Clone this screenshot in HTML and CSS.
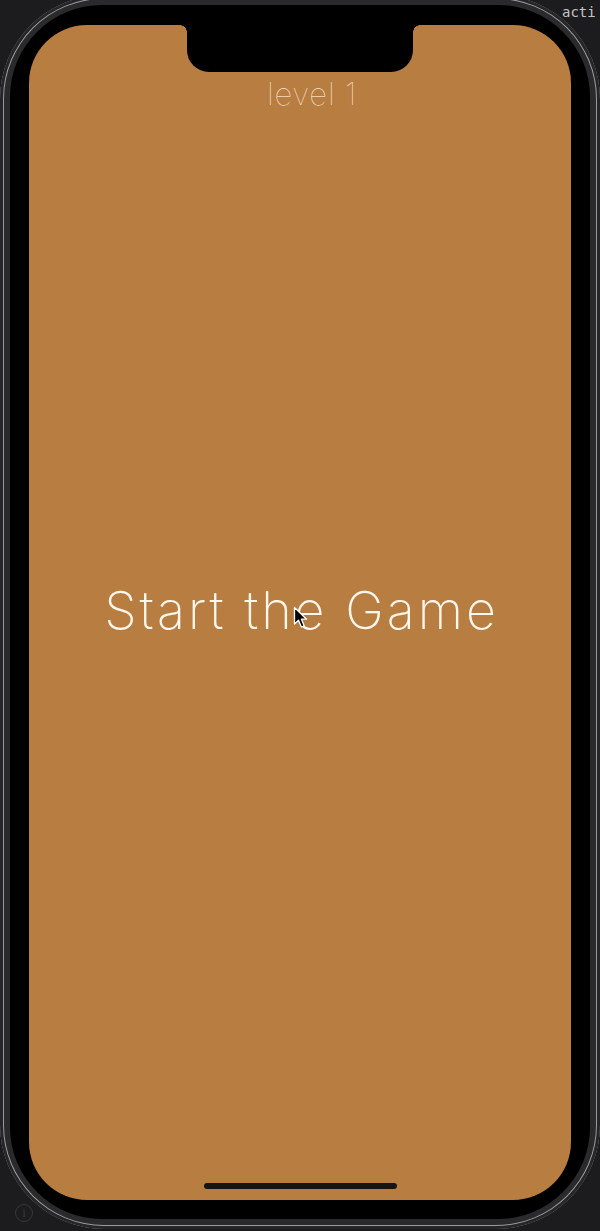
FILE: index.html
```html
<!DOCTYPE html>
<html>
<head>
<meta charset="utf-8">
<link rel="stylesheet" href="styles.css">
</head>
<body>
<div class="bg-label">acti</div>
<div class="info-icon">i</div>
<div class="phone">
  <div class="bezel">
    <div class="screen">
      <div class="notch"></div>
      <div class="level">level 1</div>
      <div class="main"><span class="start">Start the Game</span></div>
      <div class="home-bar"></div>
    </div>
  </div>
</div>
<svg class="cursor" width="16" height="24" viewBox="0 0 16 24"><path d="M1.5 1.5 L1.5 18 L5.5 14.2 L8.4 21 L11.2 19.8 L8.4 13.2 L13.6 13.2 Z" fill="#000" stroke="#fff" stroke-width="1.3" stroke-linejoin="round"/></svg>
</body>
</html>
```
FILE: styles.css
```css
html, body {
  margin: 0;
  padding: 0;
}
body {
  width: 600px;
  height: 1231px;
  overflow: hidden;
  background: #1c1c1e;
  position: relative;
}
.bg-label {
  position: absolute;
  left: 562px;
  top: 4px;
  font-family: "DejaVu Sans Mono", "Liberation Mono", monospace;
  font-size: 14px;
  color: #c4c4c6;
  z-index: 0;
}
.info-icon {
  position: absolute;
  left: 15px;
  top: 1204px;
  width: 16px;
  height: 16px;
  border: 1.5px solid #38383a;
  border-radius: 50%;
  color: #38383a;
  font-family: "Liberation Serif", serif;
  font-size: 13px;
  line-height: 16px;
  text-align: center;
  z-index: 0;
}
.phone {
  position: relative;
  z-index: 1;
  margin-top: -5px;
  width: 600px;
  height: 1234px;
  box-sizing: border-box;
  border-radius: 104px;
  background: #2a2a2c;
  box-shadow: inset 0 0 0 3px #262628, inset 0 0 0 4px #9a9a9e;
  padding: 10px;
}
.bezel {
  width: 100%;
  height: 100%;
  box-sizing: border-box;
  background: #000;
  border-radius: 92px;
  padding: 20px 19px 19px 19px;
}
.screen {
  position: relative;
  width: 100%;
  height: 100%;
  box-sizing: border-box;
  background: #b87d40;
  border-radius: 58px;
  overflow: hidden;
  display: flex;
  flex-direction: column;
  align-items: center;
  padding-bottom: 11px;
}
.notch {
  position: absolute;
  top: 0;
  left: 50%;
  transform: translateX(-50%);
  width: 226px;
  height: 47px;
  background: #000;
  border-radius: 0 0 22px 22px;
}
.notch::before,
.notch::after {
  content: "";
  position: absolute;
  top: 0;
  width: 7px;
  height: 7px;
}
.notch::before {
  left: -7px;
  background: radial-gradient(circle at 0 100%, transparent 6.5px, #000 7px);
}
.notch::after {
  right: -7px;
  background: radial-gradient(circle at 100% 100%, transparent 6.5px, #000 7px);
}
.level {
  margin-top: 53px;
  padding-left: 24px;
  font-family: Inter, "Noto Sans", sans-serif;
  font-weight: 100;
  font-size: 31px;
  line-height: 31px;
  color: #f3dcc4;
  letter-spacing: 0.8px;
}
.main {
  flex: 1;
  display: flex;
  align-items: center;
  justify-content: center;
  padding-bottom: 70px;
}
.start {
  font-family: Inter, "Noto Sans", sans-serif;
  font-weight: 200;
  font-size: 52px;
  line-height: 52px;
  color: #fff6ec;
  letter-spacing: 3px;
  padding-left: 3px;
}
.home-bar {
  width: 193px;
  height: 6px;
  border-radius: 3px;
  background: #151517;
}
.cursor {
  position: absolute;
  left: 293px;
  top: 606px;
  z-index: 2;
}
```
